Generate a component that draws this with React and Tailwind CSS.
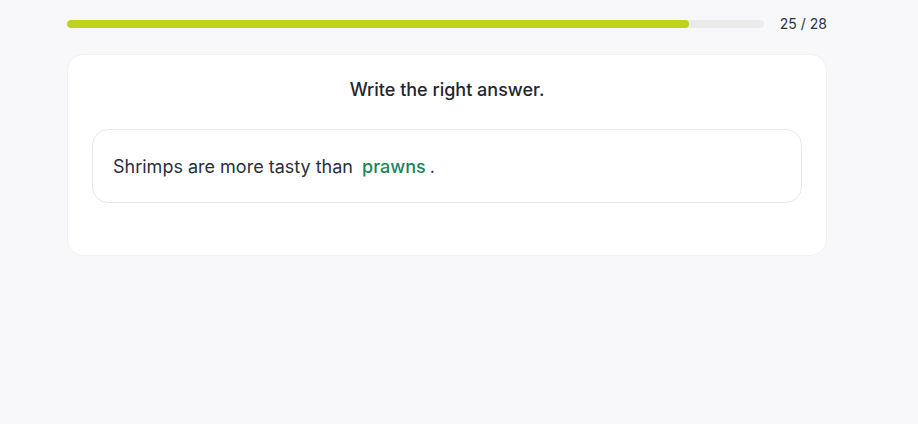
import React from 'react';

export default function App() {
  const done = 25;
  const total = 28;
  const pct = 89.2;

  return (
    <div className="min-h-screen w-full bg-[#f8f8fa]" style={{ fontFamily: 'Inter, "Noto Sans", sans-serif' }}>
      <div className="ml-[67px] w-[760px] pt-[20px]">
        {/* Progress */}
        <div className="flex items-center gap-4 h-[8px]">
          <div className="flex-1 h-[8px] rounded-full bg-[#ebebeb] overflow-hidden">
            <div className="h-full rounded-full bg-[#c0d21b]" style={{ width: `${pct}%` }} />
          </div>
          <span className="text-[14px] leading-none text-[#2a3246] whitespace-nowrap">{done} / {total}</span>
        </div>

        {/* Card */}
        <div className="mt-[26px] bg-white rounded-2xl border border-[#f0f0f3] px-6 pt-[22px] pb-[52px]">
          <h2 className="text-center text-[18px] font-medium text-[#26262e] leading-[26px]">Write the right answer.</h2>
          <div className="mt-[26px] h-[74px] rounded-2xl border border-[#e8e8ec] flex items-center px-5">
            <p className="text-[18px] text-[#2b2f3d]">
              Shrimps are more tasty than <span className="ml-[4px] font-medium text-[#1a8557]">prawns</span><span className="ml-[4px]">.</span>
            </p>
          </div>
        </div>
      </div>
    </div>
  );
}
